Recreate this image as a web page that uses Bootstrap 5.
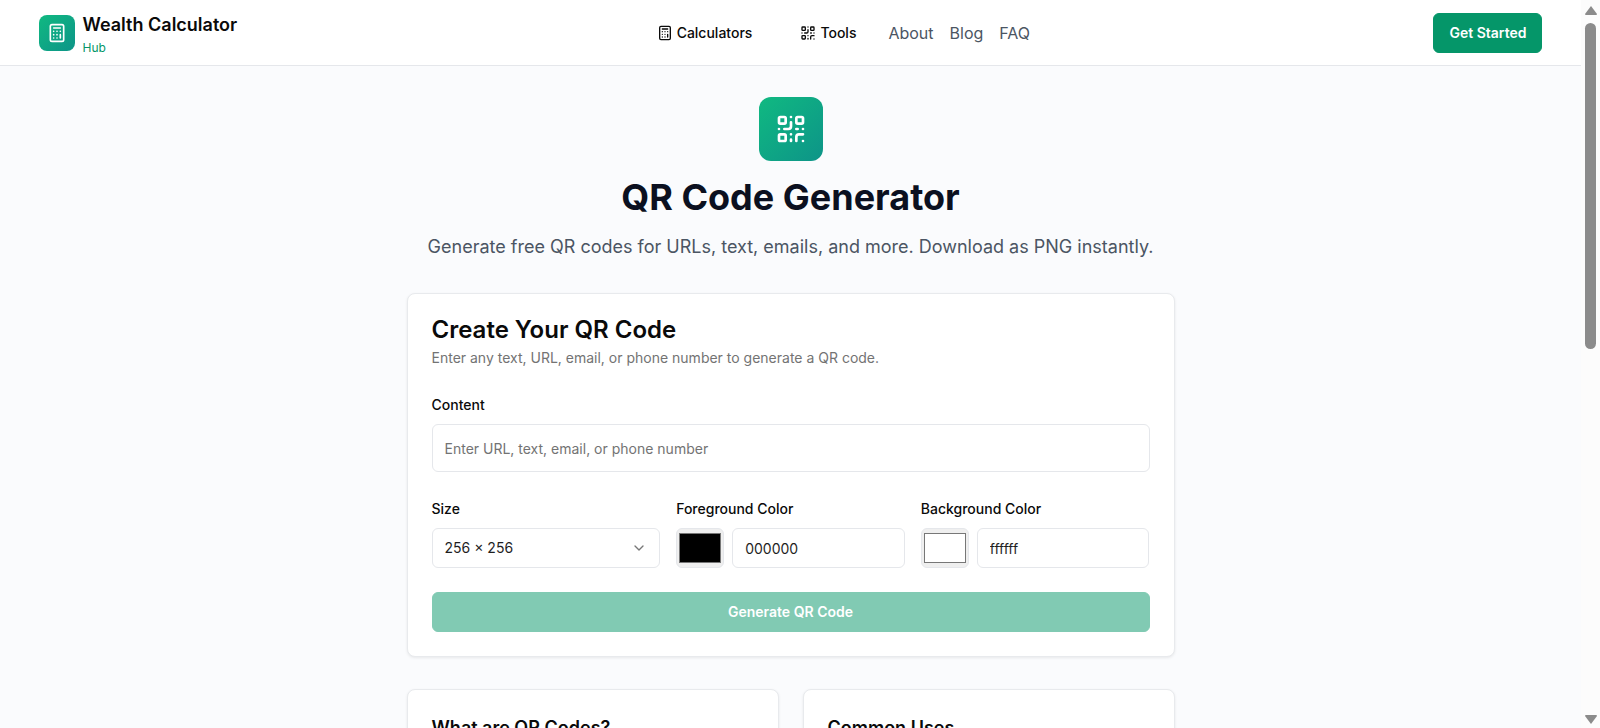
<!DOCTYPE html>
<html lang="en">
<head>
<meta charset="utf-8">
<meta name="viewport" content="width=device-width, initial-scale=1">
<title>QR Code Generator | Wealth Calculator Hub</title>
<link href="https://cdn.jsdelivr.net/npm/bootstrap@5.3.0/dist/css/bootstrap.min.css" rel="stylesheet">
<style>
  body { font-family: Inter, "Liberation Sans", sans-serif; font-size: 14px; line-height: 20px; color: #0a0a0a; background: #fafbfd; }
  .viewport-pane { min-width: 0; }
  .site-header { background: #fff; border-bottom: 1px solid #e5e7eb; }
  .site-inner { max-width: 1536px; min-height: 65px; padding: 0 16px; }
  .brand-tile { width: 36px; height: 36px; border-radius: 8px; }
  .green-tile { background: linear-gradient(135deg, #10b981, #0d9488); color: #fff; }
  .brand-name { font-size: 18px; line-height: 30px; font-weight: 600; }
  .brand-sub { font-size: 12px; line-height: 16px; color: #059669; }
  .menu-btn { font-size: 14px; line-height: 20px; font-weight: 500; color: #0a0a0a; padding: 8px 16px; gap: 4px; border: 0; }
  .plain-link { font-size: 16px; line-height: 24px; color: #4b5563; text-decoration: none; }
  .btn-green { --bs-btn-bg: #059669; --bs-btn-border-color: #059669; --bs-btn-color: #fff; --bs-btn-hover-color: #fff; --bs-btn-hover-bg: #047857; --bs-btn-disabled-bg: #059669; --bs-btn-disabled-border-color: #059669; --bs-btn-disabled-color: #fff; --bs-btn-disabled-opacity: .5; font-size: 14px; line-height: 20px; font-weight: 600; padding: 9px 15px; border-radius: 6px; }
  .page-column { max-width: 768px; padding-top: 31px; }
  .hero-tile { width: 64px; height: 64px; border-radius: 12px; }
  .hero-title { font-size: 36px; line-height: 40px; font-weight: 700; color: #0b1020; margin: 16px 0; }
  .hero-text { font-size: 18px; line-height: 28px; color: #4b5563; margin-bottom: 32px; }
  .panel { border: 1px solid #e8eaed; border-radius: 8px; box-shadow: 0 1px 3px rgba(0,0,0,.08); }
  .panel > .card-body { padding: 24px; }
  .panel-title { font-size: 24px; line-height: 24px; font-weight: 600; margin-bottom: 6px; }
  .panel-text { color: #737373; margin-bottom: 27px; }
  .field-label { font-weight: 500; line-height: 20px; margin-bottom: 9px; }
  .field-group { margin-bottom: 27px; }
  .field { font-size: 14px; line-height: 20px; height: 40px; padding: 8px 12px; border-color: #e5e7eb; border-radius: 6px; color: #1f1f1f; }
  .field::placeholder { color: #737373; }
  .field-tall { height: 48px; }
  .swatch-input { width: 48px; height: 40px; flex: none; padding: 4px 2px; border: 1px solid #e5e7eb; border-radius: 6px; background: #efefef; }
  .select-field { background-image: url("data:image/svg+xml,%3csvg xmlns='http://www.w3.org/2000/svg' viewBox='0 0 24 24' fill='none' stroke='%23777' stroke-width='2' stroke-linecap='round' stroke-linejoin='round'%3e%3cpath d='m6 9 6 6 6-6'/%3e%3c/svg%3e"); background-size: 16px 16px; }
  .info-title { font-size: 18px; line-height: 28px; font-weight: 600; margin-bottom: 12px; }
  .scroll-rail { width: 19px; background: #fcfcfc; padding: 6px 4px 0 4px; }
  .scroll-thumb { width: 11px; height: 326px; margin-top: 8px; border-radius: 6px; background: #8b8b8b; }
  svg.line-icon { fill: none; stroke: currentColor; stroke-width: 2; stroke-linecap: round; stroke-linejoin: round; flex: none; }
</style>
</head>
<body>
<svg class="d-none" xmlns="http://www.w3.org/2000/svg">
  <symbol id="i-calc" viewBox="0 0 24 24"><rect width="16" height="20" x="4" y="2" rx="2"/><path d="M8 6h8M16 14v4M16 10h.01M12 10h.01M8 10h.01M12 14h.01M8 14h.01M12 18h.01M8 18h.01"/></symbol>
  <symbol id="i-qr" viewBox="0 0 24 24"><rect width="5" height="5" x="3" y="3" rx="1"/><rect width="5" height="5" x="16" y="3" rx="1"/><rect width="5" height="5" x="3" y="16" rx="1"/><path d="M21 16h-3a2 2 0 0 0-2 2v3M21 21v.01M12 7v3a2 2 0 0 1-2 2H7M3 12h.01M12 3h.01M12 16v.01M16 12h1M21 12v.01M12 21v-1"/></symbol>
</svg>
<div class="d-flex vh-100 overflow-hidden">
  <div class="viewport-pane flex-grow-1 overflow-hidden">
    <header class="site-header">
      <div class="site-inner d-flex align-items-center justify-content-between mx-auto">
        <a href="#" class="d-inline-flex align-items-center gap-2 text-decoration-none text-reset">
          <span class="brand-tile green-tile d-flex align-items-center justify-content-center"><svg class="line-icon" width="20" height="20"><use href="#i-calc"/></svg></span>
          <span class="d-flex flex-column"><span class="brand-name">Wealth Calculator</span><span class="brand-sub">Hub</span></span>
        </a>
        <nav class="d-flex align-items-center gap-3" aria-label="Main">
          <button type="button" class="menu-btn btn d-flex align-items-center"><svg class="line-icon" width="16" height="16"><use href="#i-calc"/></svg>Calculators</button>
          <button type="button" class="menu-btn btn d-flex align-items-center"><svg class="line-icon" width="16" height="16"><use href="#i-qr"/></svg>Tools</button>
          <a href="#" class="plain-link">About</a>
          <a href="#" class="plain-link">Blog</a>
          <a href="#" class="plain-link">FAQ</a>
        </nav>
        <button type="button" class="btn btn-green">Get Started</button>
      </div>
    </header>
    <main class="page-column mx-auto">
      <div class="text-center">
        <div class="hero-tile green-tile d-flex align-items-center justify-content-center mx-auto"><svg class="line-icon" width="32" height="32"><use href="#i-qr"/></svg></div>
        <h1 class="hero-title">QR Code Generator</h1>
        <p class="hero-text">Generate free QR codes for URLs, text, emails, and more. Download as PNG instantly.</p>
      </div>
      <section class="card panel mb-4">
        <div class="card-body">
          <h2 class="panel-title">Create Your QR Code</h2>
          <p class="panel-text">Enter any text, URL, email, or phone number to generate a QR code.</p>
          <form>
            <div class="field-group">
              <label class="field-label d-block" for="content">Content</label>
              <input class="form-control field field-tall" id="content" type="text" placeholder="Enter URL, text, email, or phone number">
            </div>
            <div class="row gx-3 mb-4">
              <div class="col-4">
                <label class="field-label d-block" for="size">Size</label>
                <select class="form-select field select-field" id="size"><option>256 × 256</option><option>512 × 512</option></select>
              </div>
              <div class="col-4">
                <label class="field-label d-block" for="fg">Foreground Color</label>
                <div class="d-flex gap-2">
                  <input class="swatch-input" type="color" value="#000000" aria-label="Pick foreground color">
                  <input class="form-control field" id="fg" type="text" value="000000">
                </div>
              </div>
              <div class="col-4">
                <label class="field-label d-block" for="bg">Background Color</label>
                <div class="d-flex gap-2">
                  <input class="swatch-input" type="color" value="#ffffff" aria-label="Pick background color">
                  <input class="form-control field" id="bg" type="text" value="ffffff">
                </div>
              </div>
            </div>
            <button type="submit" class="btn btn-green w-100" disabled>Generate QR Code</button>
          </form>
        </div>
      </section>
      <div class="row gx-4 pt-2">
        <div class="col-6"><section class="card panel"><div class="card-body"><h2 class="info-title">What are QR Codes?</h2></div></section></div>
        <div class="col-6"><section class="card panel"><div class="card-body"><h2 class="info-title">Common Uses</h2></div></section></div>
      </div>
    </main>
  </div>
  <div class="scroll-rail d-flex flex-column align-items-center pb-1" aria-hidden="true">
    <svg width="12" height="9" viewBox="0 0 12 9"><path d="M6 0 L12 8 Q12 9 11 9 H1 Q0 9 0 8 Z" fill="#8b8b8b"/></svg>
    <div class="scroll-thumb"></div>
    <svg class="mt-auto" width="12" height="9" viewBox="0 0 12 9"><path d="M6 9 L12 1 Q12 0 11 0 H1 Q0 0 0 1 Z" fill="#8b8b8b"/></svg>
  </div>
</div>
<script src="https://cdn.jsdelivr.net/npm/bootstrap@5.3.0/dist/js/bootstrap.bundle.min.js"></script>
</body>
</html>
